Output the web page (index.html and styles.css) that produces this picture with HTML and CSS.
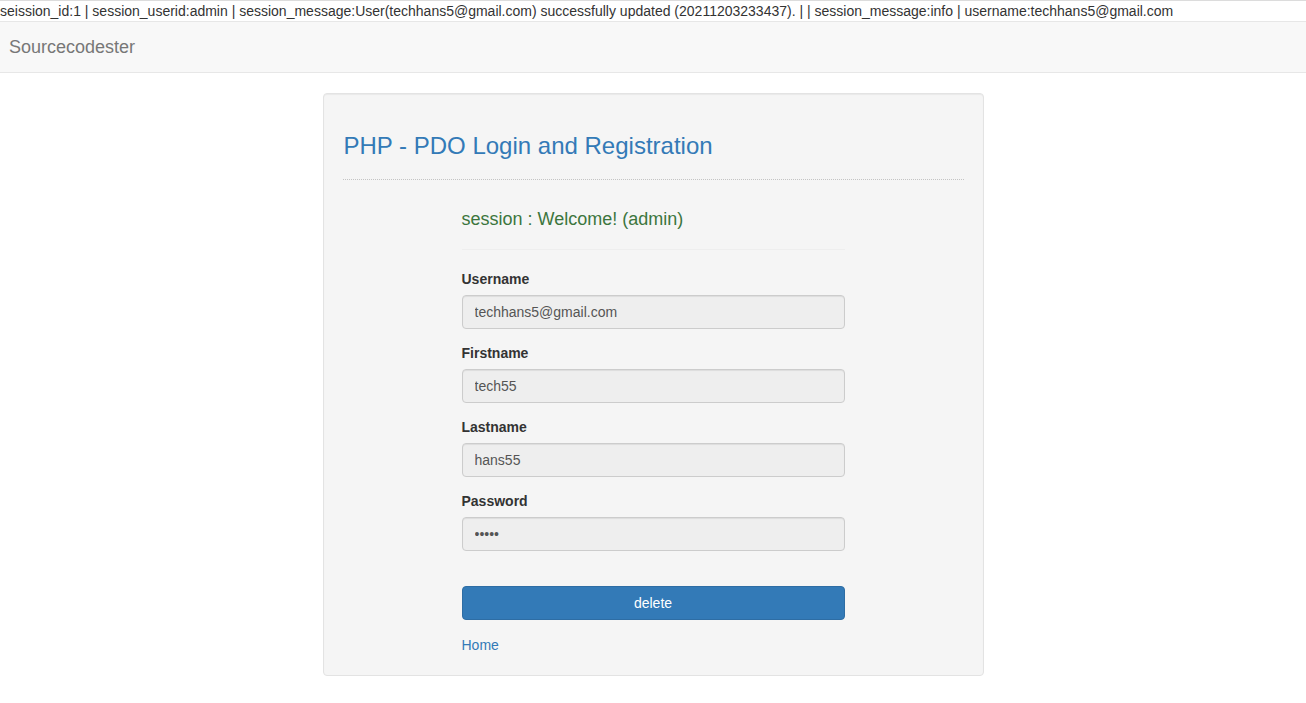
FILE: index.html
```html
<!doctype html>
<html lang="en">
  <head>
    <meta charset="UTF-8" />
    <meta name="viewport" content="width=device-width, initial-scale=1.0" />
    <title>PHP - PDO Login and Registration</title>
    <link rel="stylesheet" href="styles.css">
  </head>
  <body>
    <div class="session-dump">seission_id:1 | session_userid:admin | session_message:User(techhans5@gmail.com) successfully updated (20211203233437). | | session_message:info | username:techhans5@gmail.com</div>

    <nav class="navbar">
      <a class="navbar-brand" href="#">Sourcecodester</a>
    </nav>

    <div class="well">
      <h3 class="text-primary">PHP - PDO Login and Registration</h3>
      <hr class="dotted">

      <div class="form-col">
        <h4 class="text-success">session : Welcome! (admin)</h4>
        <hr>

        <form>
          <div class="form-group">
            <label for="username">Username</label>
            <input type="text" id="username" class="form-control" value="techhans5@gmail.com" readonly>
          </div>
          <div class="form-group">
            <label for="firstname">Firstname</label>
            <input type="text" id="firstname" class="form-control" value="tech55" readonly>
          </div>
          <div class="form-group">
            <label for="lastname">Lastname</label>
            <input type="text" id="lastname" class="form-control" value="hans55" readonly>
          </div>
          <div class="form-group">
            <label for="password">Password</label>
            <input type="password" id="password" class="form-control" value="admin" readonly>
          </div>
          <div class="button-row">
            <button type="button" class="btn btn-primary">delete</button>
          </div>
        </form>

        <a class="home-link" href="#">Home</a>
      </div>
    </div>
  </body>
</html>
```

FILE: styles.css
```css
html, body { margin: 0; padding: 0; background-color: #fff; color: #333; font-family: "Liberation Sans", Arial, sans-serif; font-size: 14px; line-height: 1.42857; }
a { color: #337ab7; text-decoration: none; }

.session-dump { border-top: 1px solid #dcdcdc; height: 20px; line-height: 20px; white-space: nowrap; color: #333; }

.navbar { display: flex; align-items: center; height: 50px; background-color: #f8f8f8; border: 1px solid #e7e7e7; border-left: none; border-right: none; margin-bottom: 20px; }
.navbar-brand { padding-left: 9px; font-size: 18px; line-height: 20px; color: #777; }

.well { width: 621px; margin: 0 auto 20px; padding: 19px; background-color: #f5f5f5; border: 1px solid #e3e3e3; border-radius: 4px; box-shadow: inset 0 1px 1px rgba(0, 0, 0, 0.05); }
.well h3 { margin: 20px 0 10px 1px; font-size: 24px; font-weight: 500; line-height: 1.1; }
.text-primary { color: #337ab7; }
.text-success { color: #3c763d; }

hr { margin: 20px 0; border: 0; border-top: 1px solid #eee; }
hr.dotted { border-top: 1px dotted #c4c4c4; }

.form-col { width: 383px; margin: 0 auto; padding-top: 9px; }
.form-col h4 { margin: 0; font-size: 18px; font-weight: 500; line-height: 20px; }
.form-col hr { margin: 20px 0; }

.form-group { margin-bottom: 15px; }
label { display: block; margin-bottom: 5px; font-weight: bold; }
.form-control { display: block; width: 100%; height: 34px; box-sizing: border-box; padding: 6px 12px; font-family: inherit; font-size: 14px; color: #555; background-color: #eee; border: 1px solid #ccc; border-radius: 4px; box-shadow: inset 0 1px 1px rgba(0, 0, 0, 0.075); outline: none; }

.button-row { margin-top: 35px; }
.btn { display: block; width: 100%; height: 34px; padding: 6px 12px; font-family: inherit; font-size: 14px; line-height: 20px; border-radius: 4px; cursor: pointer; }
.btn-primary { color: #fff; background-color: #337ab7; border: 1px solid #2e6da4; }

.home-link { display: inline-block; margin-top: 15px; line-height: 20px; }
```
